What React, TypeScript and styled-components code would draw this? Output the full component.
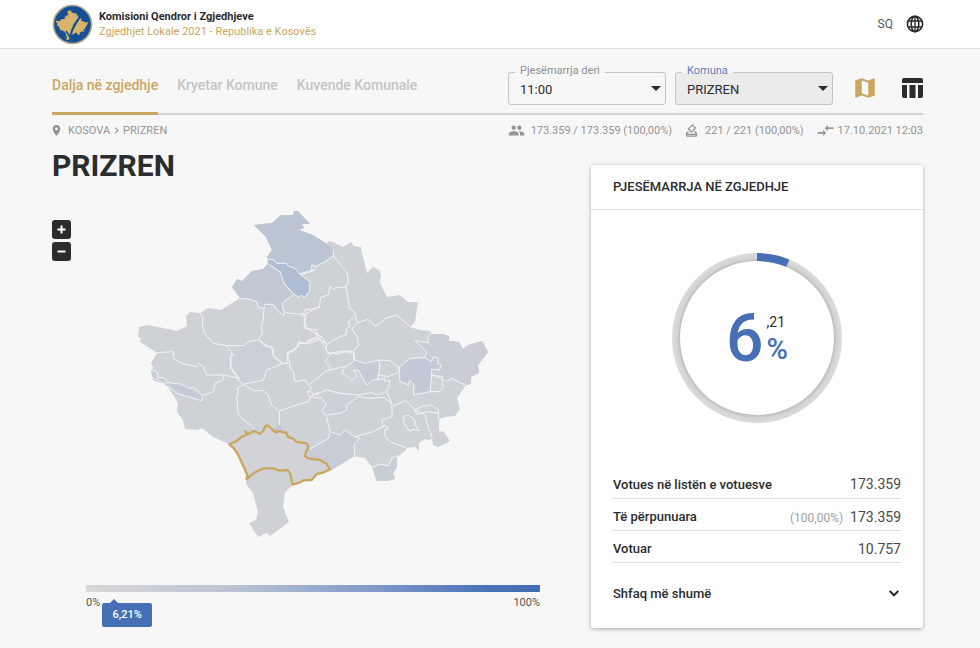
import React from "react";
import styled, { createGlobalStyle } from "styled-components";
import {
  MdChevronRight,
  MdCompareArrows,
  MdMap,
  MdOutlineHowToVote,
  MdPeople,
  MdPlace,
} from "react-icons/md";

const gold = "#cba661";
const blue = "#466fb5";
const ink = "#2b2c2e";
const page = "#f7f7f7";

const GlobalStyle = createGlobalStyle`
  *, *::before, *::after { box-sizing: border-box; }
  body { margin: 0; background: ${page}; color: ${ink}; font-family: Roboto, "Liberation Sans", sans-serif; font-size: 14px; }
  button, select { font: inherit; color: inherit; }
  svg { display: block; }
`;

const Header = styled.header`
  display: flex;
  align-items: center;
  justify-content: space-between;
  height: 49px;
  padding: 0 56px 0 52px;
  background: #fff;
  border-bottom: 1px solid #dedede;
`;

const Brand = styled.a`
  display: flex;
  align-items: center;
  gap: 6px;
  color: inherit;
  text-decoration: none;
  font-size: 11px;
  line-height: 15px;
`;

const BrandName = styled.div`
  font-weight: 700;
`;

const BrandEvent = styled.div`
  color: ${gold};
`;

const Language = styled.button`
  display: flex;
  align-items: center;
  gap: 13px;
  padding: 0;
  border: 0;
  background: none;
  font-size: 12px;
  color: #55575a;
`;

const Main = styled.main`
  padding: 0 57px 19px 52px;
`;

const Toolbar = styled.div`
  display: flex;
  justify-content: space-between;
  height: 66px;
  border-bottom: 2px solid #d3d3d3;
`;

const Tabs = styled.nav`
  display: flex;
  gap: 19px;
`;

const Tab = styled.a<{ $active?: boolean }>`
  height: 66px;
  padding-top: 8px;
  line-height: 56px;
  font-weight: 500;
  text-decoration: none;
  white-space: nowrap;
  color: ${(p) => (p.$active ? gold : "#c4c4c4")};
  border-bottom: 3px solid ${(p) => (p.$active ? gold : "transparent")};
`;

const Filters = styled.div`
  display: flex;
  align-items: center;
  padding-top: 14px;
  gap: 9px;
`;

const Field = styled.div`
  position: relative;
  width: 158px;
`;

const FieldLabel = styled.label<{ $filled?: boolean }>`
  position: absolute;
  left: 7px;
  top: -8px;
  padding: 0 5px;
  font-size: 11px;
  line-height: 14px;
  color: ${(p) => (p.$filled ? "#5c7cb8" : "#8f8f8f")};
  background: linear-gradient(${page} 9px, ${(p) => (p.$filled ? "#ebebeb" : page)} 9px);
`;

const Select = styled.select<{ $filled?: boolean }>`
  display: block;
  appearance: none;
  width: 100%;
  height: 33px;
  padding: 2px 24px 0 11px;
  border: 1px solid #c4c4c4;
  border-radius: 3px;
  background: ${(p) => (p.$filled ? "#ebebeb" : page)};
  font-size: 13px;
`;

const Caret = styled.span`
  position: absolute;
  right: 5px;
  top: 14px;
  border: 5px solid transparent;
  border-top-color: ${ink};
  border-bottom: 0;
  pointer-events: none;
`;

const Views = styled.div`
  display: flex;
  gap: 24px;
  padding-left: 10px;
`;

const ViewButton = styled.button<{ $active?: boolean }>`
  padding: 0;
  border: 0;
  background: none;
  color: ${(p) => (p.$active ? gold : ink)};
`;

const MetaRow = styled.div`
  display: flex;
  align-items: center;
  justify-content: space-between;
  height: 30px;
  font-size: 11px;
  color: #949494;
`;

const Crumbs = styled.nav`
  display: flex;
  align-items: center;
  margin-left: -2px;
`;

const CrumbLink = styled.a`
  margin-left: 5px;
  color: inherit;
  text-decoration: none;
`;

const Facts = styled.div`
  display: flex;
  gap: 12px;
`;

const Fact = styled.span<{ $gap?: number }>`
  display: flex;
  align-items: center;
  gap: ${(p) => p.$gap ?? 6}px;
  white-space: nowrap;
`;

const Columns = styled.div`
  display: grid;
  grid-template-columns: minmax(0, 1fr) 332px;
  align-items: start;
`;

const Title = styled.h1`
  margin: 0;
  font-size: 30px;
  line-height: 42px;
  font-weight: 700;
`;

const Stage = styled.div`
  display: flex;
  padding-top: 13px;
  gap: 59px;
`;

const ZoomControls = styled.div`
  display: flex;
  flex-direction: column;
  gap: 3px;
  padding-top: 20px;
`;

const ZoomButton = styled.button`
  display: grid;
  place-items: center;
  width: 19px;
  height: 19px;
  padding: 0;
  border: 0;
  border-radius: 3px;
  background: ${ink};
  color: #fff;
`;

const MapSvg = styled.svg`
  flex: 1;
  max-width: 370px;
  height: auto;
`;

const Scale = styled.div`
  margin: 35px 51px 0 34px;
  font-size: 11px;
  color: #555;
`;

const ScaleBar = styled.div`
  height: 7px;
  border-radius: 1px;
  background: linear-gradient(90deg, #d8d8d8, #b9c3d3 33%, #7b95c8 66%, #4a73b6 88%, #426cb2);
`;

const ScaleEnds = styled.div`
  position: relative;
  display: flex;
  justify-content: space-between;
  padding-top: 4px;
  line-height: 14px;
`;

const Marker = styled.output`
  position: absolute;
  top: 11px;
  width: 50px;
  margin-left: -12px;
  border-radius: 2px;
  background: ${blue};
  color: #fff;
  font-weight: 500;
  line-height: 24px;
  text-align: center;

  &::before {
    content: "";
    position: absolute;
    left: 7px;
    top: -4px;
    border: 5px solid transparent;
    border-top: 0;
    border-bottom-color: ${blue};
  }
`;

const Card = styled.section`
  margin-top: 20px;
  background: #fff;
  border-radius: 2px;
  box-shadow: 0 1px 4px rgba(0, 0, 0, 0.32);
`;

const CardTitle = styled.h2`
  margin: 0;
  padding: 0 22px;
  font-size: 13px;
  line-height: 44px;
  font-weight: 500;
  border-bottom: 1px solid #dedede;
`;

const CardBody = styled.div`
  padding: 42px 22px 18px;
`;

const Gauge = styled.div`
  display: grid;
  place-items: center;
  margin-bottom: 42px;

  > * { grid-area: 1 / 1; }
`;

const GaugeValue = styled.div`
  display: flex;
  align-items: center;
  gap: 3px;
  padding-top: 2px;
  color: ${blue};
  font-weight: 500;
`;

const Whole = styled.span`
  font-size: 66px;
  line-height: 66px;
`;

const Rest = styled.span`
  display: flex;
  flex-direction: column;
`;

const Decimals = styled.span`
  font-size: 14px;
  line-height: 20px;
  font-weight: 400;
  color: ${ink};
`;

const Percent = styled.span`
  font-size: 29px;
  line-height: 34px;
`;

const Stats = styled.table`
  width: 100%;
  border-collapse: collapse;

  th, td { height: 32px; padding: 5px 0 0; border-bottom: 1px solid #dedede; }
  th { text-align: left; font-size: 13px; font-weight: 500; }
  td { text-align: right; font-size: 14px; color: #47484a; }
`;

const Share = styled.span`
  margin-right: 7px;
  font-size: 12px;
  color: #a0a0a0;
`;

const More = styled.button`
  display: flex;
  align-items: center;
  justify-content: space-between;
  width: 100%;
  height: 32px;
  margin-top: 15px;
  padding: 0 2px 0 0;
  border: 0;
  background: none;
  font-size: 13px;
  font-weight: 500;
`;

const outline =
  "M254 225L272 223L281 215L293 215L294 211L298 211L310 224L302 224L304 228L299 230L313 235L327 244L328 241L333 242L343 247L351 242L354 246L361 247L362 253L367 273L373 267L379 270L381 275L380 283L387 297L400 295L408 302L418 302L415 322L410 327L420 330L430 331L432 334L443 334L449 336V341L459 342L463 349L468 345L482 341L488 352L482 360L478 365L479 373L471 377V384L466 385L457 398L460 409L455 416L445 417L439 419V431L444 432L450 441L445 444L438 447L433 445L432 439L428 440L425 439L419 443V451L415 447L406 448V450L397 457V467L393 473L395 479L388 481L377 481L375 477L372 467L365 458L353 456L330 471L317 474L312 480L298 483L293 485L285 492L283 507L286 515L289 522L270 536L267 533L258 537L249 523L256 520L258 512L253 493L246 484L247 477L238 455L229 444L213 437L202 428L197 430L185 429L183 420L177 412L178 403L168 387L163 383L153 378L151 372L153 367L151 363L157 353L145 345L140 342L141 338L138 337L139 327L147 325L163 328L177 331L187 326L186 316L190 312L200 313L208 308L221 310L240 298L232 287L237 279L242 281L252 271L263 269L268 263L267 257L272 250L266 237L254 225Z";

const tinted = [
  { fill: "#bcc5d4", d: "M254 225L272 223L281 215L293 215L294 211L298 211L310 224L302 224L304 228L299 230L313 235L327 244L333 250V256L325 262L318 265L312 264V270L300 274L295 268L287 263L277 263L273 259L268 259L267 257L272 250L266 237Z" },
  { fill: "#b1bdd3", d: "M268 259L273 259L277 263L287 263L295 268L300 274L310 282L309 292L305 297L300 297L293 293L283 282L280 272L268 264Z" },
  { fill: "#c3c8d5", d: "M232 287L237 279L242 281L252 271L263 269L268 264L280 272L283 282L293 295L282 303L284 316L275 305L264 308L258 307L257 302L248 299L240 298Z" },
  { fill: "#c3c9d6", d: "M398 368L410 358L425 358L427 352L432 362L434 357L438 358L437 363L441 365L439 370L432 369L431 378L430 391L415 395L414 384L410 381L400 382Z" },
  { fill: "#c7cbd6", d: "M353 362L378 360L379 370L377 380L367 385L360 374Z" },
  { fill: "#c4cad6", d: "M151 371L157 373L158 378L168 383L180 384L202 395V400L190 397L177 392L168 385L153 380Z" },
  { fill: "#c8ccd5", d: "M310 449L328 440V432L345 430L362 439L355 445V456L330 471L326 464L306 457Z" },
  { fill: "#c8cdd5", d: "M373 467L380 464L388 466L392 458L397 457V467L393 473L395 479L377 481Z" },
  { fill: "#cacdd4", d: "M415 340L428 342V337L432 334L443 334L449 336V341L459 342L463 349L468 345L482 341L488 352L482 360L478 365L479 373L471 377V384L465 385L452 378L446 381L432 376V369L439 370L441 365L437 358L432 362L427 352Z" },
  { fill: "#cbcfd6", d: "M232 350L258 339L273 349V355L283 363L267 370L263 380L243 384L232 370Z" },
  { fill: "#cbcfd6", d: "M322 398L340 394L360 398L347 408V413L325 415L321 410L326 405Z" },
];

/* Border lines are grouped by map sheet; each sheet is drawn at three units per map unit. */
const sheets = [
  {
    x: 130, y: 200,
    lines: [
      "415 178 430 178 440 190 470 190 475 198 495 205 510 222 540 245 538 275 525 290 510 287 505 293 490 280 470 260 460 245 450 215 415 192",
      "510 222 520 222 555 210",
      "210 338 218 350 217 380 225 402 250 430 290 437 340 437 355 425 385 420 398 400 393 380 398 370 402 325 385 322 380 305 355 297 330 295",
      "402 325 405 313 430 313 440 330 462 348 462 335 455 310 490 285",
      "462 335 480 340 520 342 525 330 555 325 570 322",
      "520 342 530 350 522 365 525 385 560 390 562 412 535 420 530 430 505 430 495 450 475 460 470 490 455 490 430 470 425 440 405 438 385 418",
      "290 437 310 465 300 475 302 500 328 535",
      "80 458 130 455 130 475 150 488 198 500 205 490 220 500 230 525 280 525 328 535",
    ],
  },
  {
    x: 300, y: 200,
    lines: [
      "100 150 100 168 140 215 145 245 138 262 110 262 100 268 90 258 85 285 62 292 58 320 20 340 0 348",
      "100 168 75 185 55 195 50 202 35 195 35 210 0 222",
      "138 262 145 300 148 325 163 335 172 368 205 358 225 378 245 368 255 355 290 345 331 380",
      "163 352 145 365 150 380 140 385 138 405 120 410 80 433 65 410 20 385 12 350 20 340",
      "0 430 15 430 35 420 65 410",
      "172 368 155 388 172 410 175 435 160 455 135 452 90 460 78 450 80 433",
      "160 455 165 480 195 490 235 480 270 482 297 503 330 475 375 473 380 455 345 422 385 428 385 410 395 400",
      "375 473 395 485 400 470 415 475 412 490 425 495 418 510 395 508 395 525 430 530",
    ],
  },
  {
    x: 230, y: 330,
    lines: [
      "85 28 130 60 130 75 160 100 110 120 100 150 40 163 25 150 3 115 3 70",
      "160 100 180 100 170 70 205 50 205 35 230 42 270 28 290 60 300 75 285 95 300 108 300 120 285 125 255 150 235 165 225 150 195 155 190 125 180 115 180 100",
      "290 42 270 28 255 10",
      "290 68 320 72 350 65 375 72",
      "300 120 345 110 370 95 372 75",
      "345 110 335 130 355 140 365 152 380 140 370 120 385 120 395 140 410 165 430 150 443 150 450 105 445 90",
      "480 150 465 155 465 145 443 150 445 135 475 140 510 125 503 110",
      "235 165 245 175 230 185 240 200 290 180 330 190 385 195 425 188 440 195 470 185 475 175 480 150",
      "240 200 235 215 200 225 148 243 125 225 115 195 100 182 70 182 40 163 22 175 25 190 20 200 25 255 75 297",
      "148 243 148 285",
      "240 200 275 205 290 225 275 240 285 255 330 250 350 240 350 225 385 200 420 205 460 202 485 220 487 260 455 270 460 290 430 305 375 320 345 300 330 315 300 305 290 262",
      "300 305 295 325 240 357",
      "375 320 390 325 372 345 375 390",
      "470 185 485 220",
      "235 185 245 185 250 195 265 185 265 200",
    ],
  },
  {
    x: 300, y: 360,
    lines: [
      "297 23 300 65 325 75 330 62 342 75 340 105 390 95 395 45 425 55 440 65 455 55 495 75",
      "425 55 430 80 418 95 390 95",
      "278 138 318 122 345 150 375 165 385 205 398 235",
      "345 150 365 140 395 135 415 150 415 178",
      "345 150 350 163 385 155 415 160",
      "310 170 325 165 345 180 345 195 357 212 335 208 330 215 312 190 310 170",
      "255 205 255 230 270 245 318 263",
      "218 322 240 312 265 318 275 295 292 288",
      "240 205 255 195 265 205 255 212",
    ],
  },
  {
    x: 130, y: 360,
    lines: [
      "62 28 80 35 85 55 100 52 115 68 150 72 180 85 190 82 215 105 225 105 250 95 255 70 280 60 280 45",
      "115 78 140 100 215 122 218 108",
      "62 50 85 60 100 70 115 68",
    ],
  },
];

const prizren =
  "M298 253L320 243L335 230L350 225L346 214L355 222L372 213L390 222L400 213L405 200L413 196L422 204L430 212L440 217L450 213L460 218L468 217L475 232L488 235L500 246L530 250L535 262L528 275L525 288L535 295L570 300L590 312L600 328L580 337L560 342L545 360L520 361L510 367L488 374L480 340L472 330L450 332L430 325L400 325L375 337L350 357L352 345L340 318L325 285L312 265Z";

const KosovoMap = () => (
  <MapSvg viewBox="130 200 370 350" role="img" aria-label="Kosova">
    <path d={outline} fill="#ced2d6" />
    {tinted.map((t) => (
      <path key={t.d} d={t.d} fill={t.fill} />
    ))}
    {sheets.map((s) => (
      <g key={`${s.x}-${s.y}`} transform={`translate(${s.x} ${s.y}) scale(0.33333)`} fill="none" stroke="#f1f3f7" strokeWidth="3" strokeLinejoin="round">
        {s.lines.map((l) => (
          <polyline key={l} points={l} />
        ))}
      </g>
    ))}
    <path d="M275 430L278 424L283 429L281 433L276 432Z" fill="#bfc6d6" />
    <path transform="translate(130 360) scale(0.33333)" d={prizren} fill="#d1d3d7" stroke={gold} strokeWidth="7" strokeLinejoin="round" />
  </MapSvg>
);

const Logo = () => (
  <svg width="41" height="41" viewBox="0 0 41 41" aria-hidden="true">
    <circle cx="20.5" cy="20.5" r="19" fill="#164f93" stroke="#a9a68a" strokeWidth="1.6" />
    <path transform="translate(20 20.5) scale(0.092) translate(-313 -367)" d={outline} fill="#d9b26c" />
    <path d="M29 12C23 17 20 23 18 33L14 27M18 33C20 26 23 20 29 12" fill="none" stroke="#164f93" strokeWidth="1.6" />
  </svg>
);

const Globe = () => (
  <svg width="18" height="18" viewBox="0 0 18 18" fill="none" stroke={ink} strokeWidth="1.6" aria-hidden="true">
    <circle cx="9" cy="9" r="7.6" />
    <ellipse cx="9" cy="9" rx="3.8" ry="7.6" />
    <path d="M9 1V17M2 6H16M2 12H16" strokeWidth="1.3" />
  </svg>
);

const TableIcon = () => (
  <svg width="21" height="20" viewBox="0 0 21 20" fill="currentColor" aria-hidden="true">
    <path d="M2 0H19Q21 0 21 2V5H0V2Q0 0 2 0ZM0 7H5V20H2Q0 20 0 18ZM7.5 7H13.5V20H7.5ZM16 7H21V18Q21 20 19 20H16Z" />
  </svg>
);

const Stroke = ({ width, height, d }: { width: number; height: number; d: string }) => (
  <svg width={width} height={height} viewBox={`0 0 ${width} ${height}`} fill="none" stroke="currentColor" strokeWidth="2" aria-hidden="true">
    <path d={d} />
  </svg>
);

const GaugeRing = ({ value }: { value: number }) => {
  const r = 81;
  const length = 2 * Math.PI * r;
  return (
    <svg width="172" height="172" viewBox="0 0 172 172" aria-hidden="true">
      <defs>
        <radialGradient id="ring" gradientUnits="userSpaceOnUse" cx="86" cy="86" r="85">
          <stop offset="0.9" stopColor="#b8b8b8" />
          <stop offset="0.94" stopColor="#d3d3d3" />
          <stop offset="1" stopColor="#dcdcdc" />
        </radialGradient>
      </defs>
      <circle cx="86" cy="86" r={r} fill="none" stroke="url(#ring)" strokeWidth="8" />
      <circle cx="86" cy="86" r={r} fill="none" stroke={blue} strokeWidth="8" strokeDasharray={`${(length * value) / 100} ${length}`} transform="rotate(-90 86 86)" />
    </svg>
  );
};

const stats = [
  { label: "Votues në listën e votuesve", value: "173.359" },
  { label: "Të përpunuara", share: "(100,00%)", value: "173.359" },
  { label: "Votuar", value: "10.757" },
];

export default function App() {
  const turnout = 6.21;
  return (
    <>
      <GlobalStyle />
      <Header>
        <Brand href="#">
          <Logo />
          <div>
            <BrandName>Komisioni Qendror i Zgjedhjeve</BrandName>
            <BrandEvent>Zgjedhjet Lokale 2021 - Republika e Kosovës</BrandEvent>
          </div>
        </Brand>
        <Language type="button">
          SQ
          <Globe />
        </Language>
      </Header>
      <Main>
        <Toolbar>
          <Tabs>
            <Tab href="#" $active>Dalja në zgjedhje</Tab>
            <Tab href="#">Kryetar Komune</Tab>
            <Tab href="#">Kuvende Komunale</Tab>
          </Tabs>
          <Filters>
            <Field>
              <Select id="time" defaultValue="11:00">
                <option>11:00</option>
              </Select>
              <FieldLabel htmlFor="time">Pjesëmarrja deri</FieldLabel>
              <Caret />
            </Field>
            <Field>
              <Select id="municipality" defaultValue="PRIZREN" $filled>
                <option>PRIZREN</option>
              </Select>
              <FieldLabel htmlFor="municipality" $filled>Komuna</FieldLabel>
              <Caret />
            </Field>
            <Views>
              <ViewButton type="button" aria-label="Harta" $active><MdMap size={26} /></ViewButton>
              <ViewButton type="button" aria-label="Tabela"><TableIcon /></ViewButton>
            </Views>
          </Filters>
        </Toolbar>
        <MetaRow>
          <Crumbs>
            <MdPlace size={13} />
            <CrumbLink href="#">KOSOVA</CrumbLink>
            <MdChevronRight size={13} />
            <span>PRIZREN</span>
          </Crumbs>
          <Facts>
            <Fact><MdPeople size={17} />173.359 / 173.359 (100,00%)</Fact>
            <Fact><MdOutlineHowToVote size={15} />221 / 221 (100,00%)</Fact>
            <Fact $gap={3}><MdCompareArrows size={19} />17.10.2021 12:03</Fact>
          </Facts>
        </MetaRow>
        <Columns>
          <div>
            <Title>PRIZREN</Title>
            <Stage>
              <ZoomControls>
                <ZoomButton type="button" aria-label="Zmadho"><Stroke width={9} height={9} d="M4.5 0.5V8.5M0.5 4.5H8.5" /></ZoomButton>
                <ZoomButton type="button" aria-label="Zvogëlo"><Stroke width={9} height={9} d="M0.5 4.5H8.5" /></ZoomButton>
              </ZoomControls>
              <KosovoMap />
            </Stage>
            <Scale>
              <ScaleBar />
              <ScaleEnds>
                <span>0%</span>
                <span>100%</span>
                <Marker style={{ left: `${turnout}%` }}>6,21%</Marker>
              </ScaleEnds>
            </Scale>
          </div>
          <Card>
            <CardTitle>PJESËMARRJA NË ZGJEDHJE</CardTitle>
            <CardBody>
              <Gauge>
                <GaugeRing value={turnout} />
                <GaugeValue>
                  <Whole>6</Whole>
                  <Rest>
                    <Decimals>,21</Decimals>
                    <Percent>%</Percent>
                  </Rest>
                </GaugeValue>
              </Gauge>
              <Stats>
                <tbody>
                  {stats.map((s) => (
                    <tr key={s.label}>
                      <th scope="row">{s.label}</th>
                      <td>
                        {s.share && <Share>{s.share}</Share>}
                        {s.value}
                      </td>
                    </tr>
                  ))}
                </tbody>
              </Stats>
              <More type="button">
                Shfaq më shumë
                <Stroke width={10} height={7} d="M0.7 1L5 5.3L9.3 1" />
              </More>
            </CardBody>
          </Card>
        </Columns>
      </Main>
    </>
  );
}
